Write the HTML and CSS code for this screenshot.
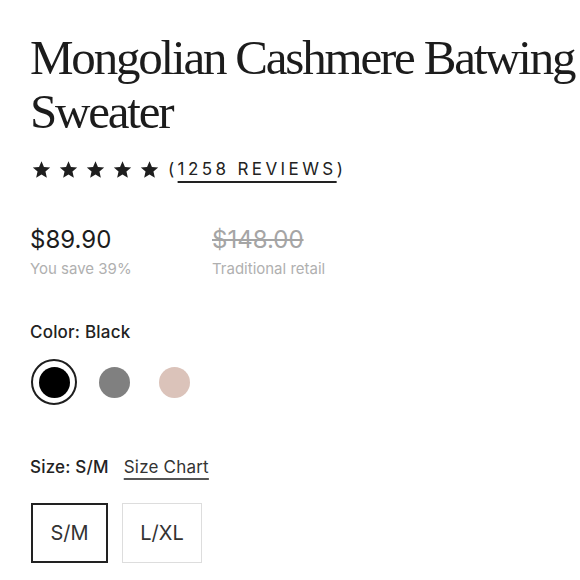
FILE: index.html
```html
<!DOCTYPE html>
<html lang="en">
<head>
<meta charset="utf-8">
<title>Mongolian Cashmere Batwing Sweater</title>
<link rel="stylesheet" href="styles.css">
</head>
<body>
<main class="product">
  <h1 class="title">Mongolian Cashmere Batwing Sweater</h1>

  <div class="rating">
    <span class="stars">
      <svg class="star" viewBox="0 0 24 24"><path d="M12 1.5l3.09 7.26 7.86.7-5.960 5.2 1.77 7.7L12 18.3l-6.76 4.06 1.77-7.7-5.96-5.2 7.86-.7z"/></svg>
      <svg class="star" viewBox="0 0 24 24"><path d="M12 1.5l3.09 7.26 7.86.7-5.960 5.2 1.77 7.7L12 18.3l-6.76 4.06 1.77-7.7-5.96-5.2 7.86-.7z"/></svg>
      <svg class="star" viewBox="0 0 24 24"><path d="M12 1.5l3.09 7.26 7.86.7-5.960 5.2 1.77 7.7L12 18.3l-6.76 4.06 1.77-7.7-5.96-5.2 7.86-.7z"/></svg>
      <svg class="star" viewBox="0 0 24 24"><path d="M12 1.5l3.09 7.26 7.86.7-5.960 5.2 1.77 7.7L12 18.3l-6.76 4.06 1.77-7.7-5.96-5.2 7.86-.7z"/></svg>
      <svg class="star" viewBox="0 0 24 24"><path d="M12 1.5l3.09 7.26 7.86.7-5.960 5.2 1.77 7.7L12 18.3l-6.76 4.06 1.77-7.7-5.96-5.2 7.86-.7z"/></svg>
    </span>
    <span class="reviews">(<a class="reviews-link" href="#">1258 Reviews</a>)</span>
  </div>

  <div class="prices">
    <div class="price-col">
      <div class="price">$89.90</div>
      <div class="note">You save 39%</div>
    </div>
    <div class="price-col">
      <div class="price price-old">$148.00</div>
      <div class="note">Traditional retail</div>
    </div>
  </div>

  <div class="option-label">Color: Black</div>
  <div class="swatches">
    <span class="swatch-slot selected"><span class="swatch swatch-black"></span></span>
    <span class="swatch-slot"><span class="swatch swatch-gray"></span></span>
    <span class="swatch-slot"><span class="swatch swatch-pink"></span></span>
  </div>

  <div class="option-label size-label">Size: S/M <a class="size-chart" href="#">Size Chart</a></div>
  <div class="sizes">
    <button class="size-btn active">S/M</button>
    <button class="size-btn">L/XL</button>
  </div>
</main>
</body>
</html>
```

FILE: styles.css
```css
* { box-sizing: border-box; }

html, body {
  margin: 0;
  padding: 0;
  background: #ffffff;
}

body {
  font-family: Inter, "Liberation Sans", sans-serif;
  color: #222222;
}

.product {
  padding: 31px 0 0 30px;
  display: flex;
  flex-direction: column;
  align-items: flex-start;
}

.title {
  margin: 0;
  width: 548px;
  font-family: "Liberation Serif", "Times New Roman", serif;
  font-weight: 400;
  font-size: 49px;
  line-height: 54px;
  letter-spacing: -2.2px;
  color: #1c1c1c;
}

.rating {
  display: flex;
  align-items: center;
  margin-top: 19px;
  height: 22px;
}

.stars {
  display: flex;
  gap: 8px;
  margin-left: 2px;
}

.star {
  width: 19px;
  height: 19px;
  fill: #1e1e1e;
}

.reviews {
  margin-left: 9px;
  font-size: 17px;
  letter-spacing: 3.4px;
  text-transform: uppercase;
  color: #222;
}

.reviews-link {
  color: inherit;
  text-decoration: underline;
  text-decoration-thickness: 2px;
  text-underline-offset: 6px;
}

.prices {
  display: flex;
  margin-top: 46px;
}

.price-col {
  width: 182px;
  display: flex;
  flex-direction: column;
}

.price {
  font-size: 24px;
  line-height: 28px;
  color: #1c1c1c;
}

.price-old {
  color: #a5a5a5;
  text-decoration: line-through;
  text-decoration-thickness: 2px;
}

.note {
  margin-top: 6px;
  font-size: 15px;
  line-height: 18px;
  color: #b0b0b0;
}

.option-label {
  margin-top: 44px;
  font-size: 17px;
  line-height: 20px;
  font-weight: 500;
  letter-spacing: 0.2px;
  color: #222;
}

.swatches {
  display: flex;
  gap: 14px;
  margin-top: 17px;
  margin-left: 1px;
}

.swatch-slot {
  width: 46px;
  height: 46px;
  border-radius: 50%;
  display: flex;
  align-items: center;
  justify-content: center;
  border: 2px solid transparent;
}

.swatch-slot.selected {
  border-color: #1e1e1e;
}

.swatch {
  width: 31px;
  height: 31px;
  border-radius: 50%;
  display: block;
}

.swatch-black { background: #000000; }
.swatch-gray { background: #808080; }
.swatch-pink { background: #dbc3ba; }

.size-label {
  margin-top: 52px;
  display: flex;
  gap: 15px;
}

.size-chart {
  font-weight: 400;
  color: #333;
  text-decoration: underline;
  text-decoration-thickness: 2px;
  text-decoration-color: #555;
  text-underline-offset: 5px;
}

.sizes {
  display: flex;
  gap: 14px;
  margin-top: 26px;
  margin-left: 1px;
}

.size-btn {
  width: 77px;
  height: 60px;
  background: #fff;
  border: 1.5px solid #dddddd;
  font-family: Inter, "Liberation Sans", sans-serif;
  font-size: 20px;
  color: #333;
  padding: 0;
}

.size-btn + .size-btn {
  width: 80px;
}

.size-btn.active {
  border: 2px solid #222;
}
```
